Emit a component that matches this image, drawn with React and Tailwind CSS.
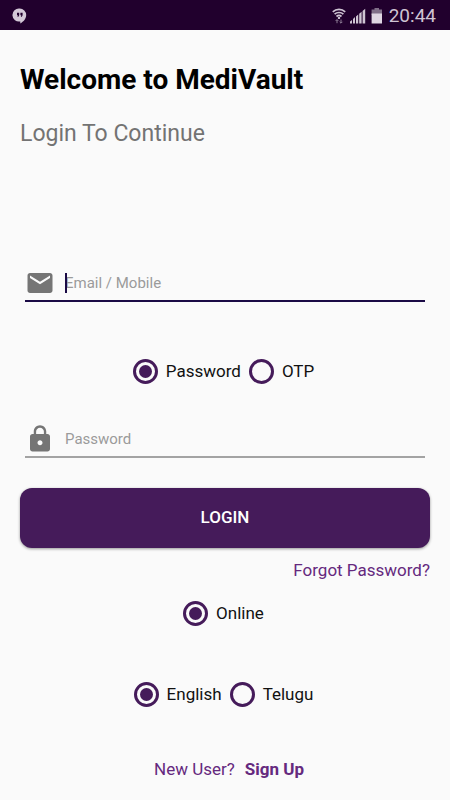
import React, { useState } from 'react';

const StatusBar = () => (
    <header className="flex h-[30px] items-center justify-between bg-[#21002d] pt-px pl-3 pr-[14px] text-[#cfc4d3]">
        <svg className="h-4 w-4" viewBox="0 0 16 16" aria-hidden="true">
            <path fill="#d3c8d7" d="M7.700.6a6.500 6.500 0 0 1 6.500 6.500c0 3.700-2.600 6.500-5.900 8.400v-2.100A6.500 6.500 0 1 1 7.700.6z" />
            <path fill="#21002d" d="M5 4.800h2.200v2.500L6.400 8.800H5.400L5.900 7.300H5zM8.400 4.800h2.200v2.500L9.800 8.800H8.800L9.300 7.300H8.400z" />
        </svg>
        <div className="flex items-center">
            <svg className="h-4 w-[14px]" viewBox="0 0 14 16" fill="none" stroke="currentColor" aria-hidden="true">
                <path strokeWidth="1.700" d="M.8 3.800a9 9 0 0 1 12.400 0M2.600 6.200a6.500 6.500 0 0 1 8.800 0M4.500 8.500a3.800 3.800 0 0 1 5 0" />
                <circle cx="7" cy="9.900" r="1.200" fill="currentColor" stroke="none" />
                <path stroke="#8d7c95" strokeWidth="1" d="M5 15.200v-3.500M3.600 13l1.400-1.400L6.400 13M9 11.500V15M7.600 13.800L9 15.200l1.400-1.400" />
            </svg>
            <svg className="ml-1 h-4 w-4" viewBox="0 0 16 16" fill="currentColor" aria-hidden="true">
                <path d="M0 13.500l2-1.500v3.500H0zM3 11l2-2v6.500H3zM6 8.500l2.200-2v9H6zM9.200 5.800l2.400-2v11.700H9.200zM12.600 3L15.200.8v14.700h-2.600z" />
            </svg>
            <svg className="ml-[5px] h-4 w-3" viewBox="0 0 12 16" aria-hidden="true">
                <path fill="#806f88" d="M3.500 0h4.500v1.500H11V7H.6V1.500h2.900z" />
                <path fill="#dfd6e2" d="M.6 5.500H11v10H.6z" />
            </svg>
            <span className="ml-[6px] text-[19px] leading-6">20:44</span>
        </div>
    </header>
);

const RadioOption = ({ name, label, checked, onChange }) => (
    <label className="flex items-center gap-2 text-[17px] leading-6 text-[#111111]">
        <input
            type="radio"
            name={name}
            checked={checked}
            onChange={onChange}
            className="h-[25px] w-[25px] appearance-none rounded-full border-3 border-[#451b5a] bg-clip-content p-[3px] checked:bg-[#451b5a]"
        />
        {label}
    </label>
);

const RadioRow = ({ name, options, value, onChange, className }) => (
    <div role="radiogroup" aria-label={name} className={`flex h-[26px] items-center justify-center gap-2 pr-[3px] ${className}`}>
        {options.map(option => (
            <RadioOption
                key={option}
                name={name}
                label={option}
                checked={value === option}
                onChange={() => onChange(option)}
            />
        ))}
    </div>
);

const App = () => {
    const [method, setMethod] = useState('Password');
    const [mode, setMode] = useState('Online');
    const [language, setLanguage] = useState('English');
    const [email, setEmail] = useState('');
    const [password, setPassword] = useState('');

    return (
        <div className="min-h-screen bg-[#fafafa] font-['Roboto',sans-serif]">
            <StatusBar />
            <main className="px-5 pb-4">
                <h1 className="mt-8 text-[28px] leading-9 font-bold text-black">Welcome to MediVault</h1>
                <p className="mt-5 text-[23px] leading-8 text-[#737373]">Login To Continue</p>

                <form onSubmit={(e) => e.preventDefault()}>
                    <div className="mx-[5px] mt-[116px] flex h-9 items-center border-b-2 border-[#1a0a45]">
                        <svg className="h-[30px] w-[30px]" viewBox="0 0 24 24" fill="#757575" aria-hidden="true">
                            <path d="M20 4H4c-1.100 0-1.990.9-1.990 2L2 18c0 1.100.9 2 2 2h16c1.100 0 2-.9 2-2V6c0-1.100-.9-2-2-2zm0 4l-8 5-8-5V6l8 5 8-5v2z" />
                        </svg>
                        <div className="relative ml-[10px] flex-1">
                            {email === '' && <span className="absolute left-0 top-1/2 h-5 w-[2px] -translate-y-1/2 bg-[#1a0a45]" />}
                            <input
                                type="text"
                                aria-label="Email / Mobile"
                                placeholder="Email / Mobile"
                                value={email}
                                onChange={(e) => setEmail(e.target.value)}
                                className="block w-full bg-transparent text-[15px] leading-6 outline-none placeholder:text-[#9b9b9b]"
                            />
                        </div>
                    </div>

                    <RadioRow name="Login method" options={['Password', 'OTP']} value={method} onChange={setMethod} className="mt-14" />

                    <div className="mx-[5px] mt-[37px] flex h-[37px] items-center border-b-2 border-[#a3a3a3]">
                        <svg className="h-[30px] w-[30px]" viewBox="0 0 24 24" fill="#757575" aria-hidden="true">
                            <path d="M18 8h-1V6c0-2.760-2.240-5-5-5S7 3.240 7 6v2H6c-1.100 0-2 .9-2 2v10c0 1.100.9 2 2 2h12c1.100 0 2-.9 2-2V10c0-1.100-.9-2-2-2zm-6 9c-1.100 0-2-.9-2-2s.9-2 2-2 2 .9 2 2-.9 2-2 2zm3.100-9H8.900V6c0-1.710 1.390-3.100 3.100-3.100 1.710 0 3.100 1.390 3.100 3.100v2z" />
                        </svg>
                        <input
                            type="password"
                            aria-label="Password"
                            placeholder="Password"
                            value={password}
                            onChange={(e) => setPassword(e.target.value)}
                            className="ml-[10px] block flex-1 bg-transparent text-[15px] leading-6 outline-none placeholder:text-[#9b9b9b]"
                        />
                    </div>

                    <button
                        type="submit"
                        className="mt-[30px] block h-[60px] w-full rounded-xl bg-[#451b5a] text-[17px] font-medium text-white shadow-[0_1px_3px_rgba(0,0,0,0.4)]"
                    >
                        LOGIN
                    </button>
                </form>

                <div className="mt-[10px] text-right text-[17px] leading-6">
                    <a href="#forgot" className="text-[#65297e]">Forgot Password?</a>
                </div>

                <RadioRow name="Mode" options={['Online']} value={mode} onChange={setMode} className="mt-[18px]" />
                <RadioRow name="Language" options={['English', 'Telugu']} value={language} onChange={setLanguage} className="mt-[55px]" />

                <p className="mt-[50px] flex justify-center gap-[10px] pl-2 text-[17px] leading-6 text-[#65297e]">
                    <span>New User?</span>
                    <a href="#signup" className="font-bold">Sign Up</a>
                </p>
            </main>
        </div>
    );
};

export default App;
